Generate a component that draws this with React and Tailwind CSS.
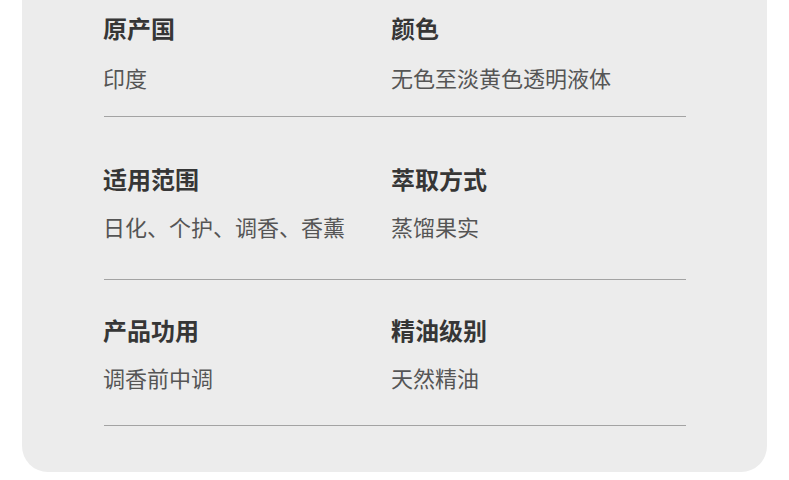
import React from 'react';

const rows = [
  {
    items: [
      { label: '原产国', value: '印度' },
      { label: '颜色', value: '无色至淡黄色透明液体' },
    ],
    pad: 'pt-[12px]',
    gap: 'mt-[18px]',
    line: 'mt-[24px]',
  },
  {
    items: [
      { label: '适用范围', value: '日化、个护、调香、香薰' },
      { label: '萃取方式', value: '蒸馏果实' },
    ],
    pad: 'pt-[46px]',
    gap: 'mt-[16px]',
    line: 'mt-[38px]',
  },
  {
    items: [
      { label: '产品功用', value: '调香前中调' },
      { label: '精油级别', value: '天然精油' },
    ],
    pad: 'pt-[34px]',
    gap: 'mt-[16px]',
    line: 'mt-[33px]',
  },
];

export default function App() {
  return (
    <div
      className="w-[789px] h-[480px] bg-white overflow-hidden"
      style={{ fontFamily: '"Noto Sans CJK SC", "Noto Sans", sans-serif' }}
    >
      <div className="ml-[22px] w-[745px] h-[472px] bg-[#ececec] rounded-b-[26px] pl-[82px]">
        {rows.map((row, i) => (
          <div key={i} className={`w-[582px] ${row.pad}`}>
            <div className="grid grid-cols-[288px_1fr]">
              {row.items.map((item) => (
                <div key={item.label} className="-ml-px">
                  <div className="text-[24px] leading-[32px] font-bold text-[#363636]">
                    {item.label}
                  </div>
                  <div className={`${row.gap} text-[22px] leading-[30px] text-[#555555]`}>
                    {item.value}
                  </div>
                </div>
              ))}
            </div>
            <div className={`${row.line} h-px bg-[#a3a3a3]`} />
          </div>
        ))}
      </div>
    </div>
  );
}
